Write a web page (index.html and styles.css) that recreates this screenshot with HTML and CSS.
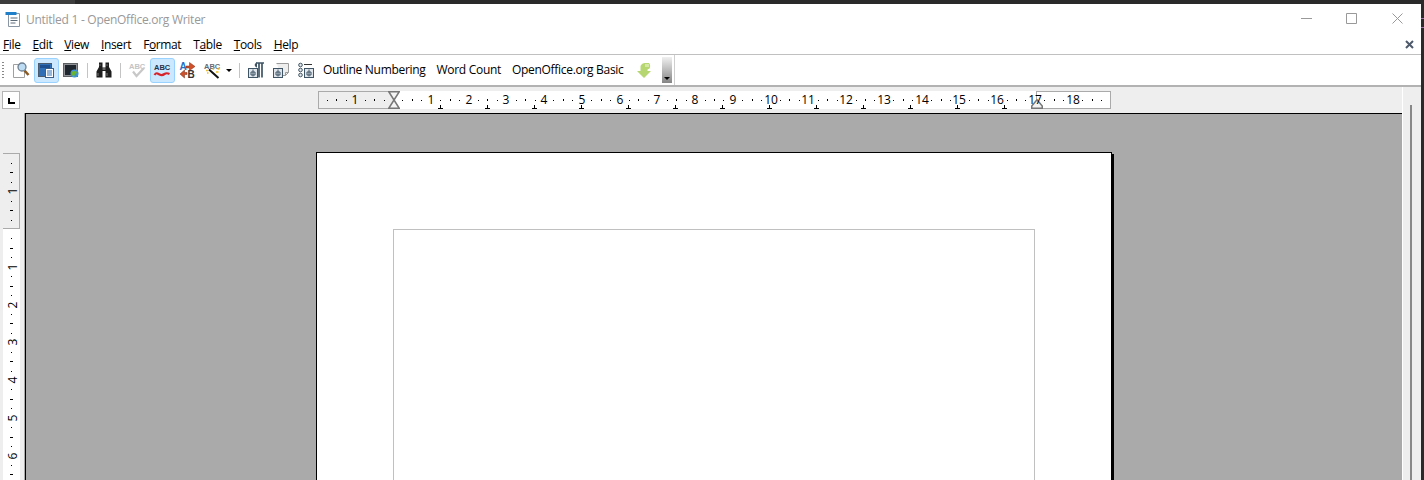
FILE: index.html
```html
<!DOCTYPE html>
<html lang="en">
<head>
  <meta charset="UTF-8">
  <title>Untitled 1 - OpenOffice.org Writer</title>
  <link rel="stylesheet" href="styles.css">
</head>
<body>
<div class="desktop-top"><div class="desktop-top-a"></div></div>
<div class="desktop-row">
<div class="window">

  <header class="titlebar">
    <svg class="app-icon" viewBox="0 0 16 16">
      <path d="M3.500 2.500h11v13h-11z" fill="#fff" stroke="#8a96a3"/>
      <rect x="0.500" y="1" width="11" height="3" fill="#1f7fc9"/>
      <path d="M5.500 7h7M5.500 9.500h7M5.500 12h5" stroke="#5d6b78"/>
    </svg>
    <span class="title-text">Untitled 1 - OpenOffice.org Writer</span>
    <div class="win-buttons">
      <svg class="win-min" viewBox="0 0 11 11"><path d="M0 5.500h11" stroke="#999"/></svg>
      <svg class="win-max" viewBox="0 0 11 11"><path d="M.5.5h10v10H.5z" fill="none" stroke="#999"/></svg>
      <svg class="win-close" viewBox="0 0 11 11"><path d="M.5.5l10 10M10.500.5l-10 10" fill="none" stroke="#999"/></svg>
    </div>
  </header>

  <nav class="menubar">
    <span><u>F</u>ile</span>
    <span><u>E</u>dit</span>
    <span><u>V</u>iew</span>
    <span><u>I</u>nsert</span>
    <span>F<u>o</u>rmat</span>
    <span>T<u>a</u>ble</span>
    <span><u>T</u>ools</span>
    <span><u>H</u>elp</span>
    <svg class="doc-close" viewBox="0 0 9 9"><path d="M1 1l7 7M8 1l-7 7" stroke="#4e5a6c" stroke-width="2"/></svg>
  </nav>

  <div class="toolbar-wrap">
    <div class="toolbar">
      <div class="grip"></div>

      <div class="tb">
        <svg viewBox="0 0 16 16">
          <path d="M.5 2.500h8l3 3v10H.5z" fill="#fff" stroke="#a0a0a0"/>
          <path d="M11.500 8.500l4 4.500" stroke="#8a5a20" stroke-width="2.600"/>
          <circle cx="9" cy="5" r="4" fill="#bcdcf4" stroke="#6d7f90" stroke-width="1.300"/>
        </svg>
      </div>
      <div class="tb on">
        <svg viewBox="0 0 16 16">
          <rect x="0.500" y="1.500" width="13" height="13" fill="#2e6fb5" stroke="#4a5c6e"/>
          <rect x="2" y="3" width="10" height="3" fill="#1c4f8f"/>
          <rect x="7.500" y="6.500" width="8" height="9" fill="#fff" stroke="#3c5f88"/>
          <path d="M9 9h5M9 11h5M9 13h5" stroke="#2e6fb5"/>
        </svg>
      </div>
      <div class="tb">
        <svg viewBox="0 0 16 16">
          <rect x="0.500" y="1.500" width="14" height="13" fill="#8f9296" stroke="#5d6063"/>
          <rect x="2" y="3" width="11" height="10" fill="#20262e"/>
          <circle cx="11.500" cy="11.500" r="4" fill="#3d92d6"/>
          <path d="M9 10c2-2 3 0 4-1l1 2-2 1-1 3-2-2z" fill="#6ab52f"/>
        </svg>
      </div>
      <div class="tb-sep"></div>
      <div class="tb">
        <svg viewBox="0 0 16 16">
          <path d="M3 .5h3.500v5h3v-5H13v4.500l2.500 4.500v6H9.500V9h-3v6.500H.5v-6L3 5z" fill="#1d1d1d"/>
          <path d="M2 11v3M11 11v3" stroke="#777"/>
          <rect x="6.500" y="6" width="3" height="2" fill="#666"/>
          <path d="M4 2v2M11 2v2" stroke="#666"/>
        </svg>
      </div>
      <div class="tb-sep"></div>
      <div class="tb">
        <svg viewBox="0 0 16 16">
          <text x="0" y="6.500" class="abc abc-off">ABC</text>
          <path d="M4 9.500l3.500 4.500 7.500-8" fill="none" stroke="#c8c8c8" stroke-width="2.200"/>
        </svg>
      </div>
      <div class="tb on">
        <svg viewBox="0 0 16 16">
          <text x="0" y="7.500" class="abc">ABC</text>
          <path d="M0.500 13c2-3 3-1.500 5-.5s3 1 5-.5 3-1 5 0" fill="none" stroke="#d8232a" stroke-width="2.200"/>
        </svg>
      </div>
      <div class="tb">
        <svg viewBox="0 0 16 16">
          <text x="0.500" y="8" class="big-a">A</text>
          <text x="8.500" y="15.500" class="big-b">B</text>
          <path d="M7 4h3.500V.5L16 4.500l-5.500 4V6H7z" fill="#d0502a" stroke="#7c2a12" stroke-width=".5"/>
          <path d="M8 12.500H5.500V16L1 12l4.500-4v2.500H8z" fill="#d0502a" stroke="#7c2a12" stroke-width=".5"/>
        </svg>
      </div>
      <div class="tb">
        <svg viewBox="0 0 16 16">
          <text x="0" y="6.500" class="abc abc-gray">ABC</text>
          <path d="M5 7.500l9.500 8.500" stroke="#111" stroke-width="2"/>
          <path d="M2 8.500h2M13.500 7h2M12 10h2.500M3 11h1.500M8.500 7h1.500" stroke="#f0c020" stroke-width="1.400"/>
        </svg>
      </div>
      <div class="tb-drop"></div>
      <div class="tb-sep tb-sep-b"></div>
      <div class="tb">
        <svg viewBox="0 0 16 16">
          <path d="M8 1h8M11 1.500v14M14 1.500v14" stroke="#3f5566" stroke-width="1.700"/>
          <path d="M9 .5C6 1 6 5 9 5.500z" fill="#3f5566"/>
          <rect x="0.500" y="6.500" width="9" height="9" fill="#dfe5ea" stroke="#3f5566"/>
          <path d="M5 7.500v7M3 10h4v3H3z" fill="none" stroke="#3f5566"/>
        </svg>
      </div>
      <div class="tb">
        <svg viewBox="0 0 16 16">
          <path d="M3.500 1.500h12v9l-3 3h-4" fill="#eee" stroke="#9a9a9a"/>
          <path d="M12.500 13.500v-3h3" fill="none" stroke="#9a9a9a"/>
          <rect x="0.500" y="6.500" width="9" height="9" fill="#dfe5ea" stroke="#3f5566"/>
          <path d="M5 7.500v7M3 10h4v3H3z" fill="none" stroke="#3f5566"/>
        </svg>
      </div>
      <div class="tb">
        <svg viewBox="0 0 16 16">
          <circle cx="2.500" cy="3" r="1.800" fill="#dfe5ea" stroke="#3f5566"/>
          <circle cx="2.500" cy="8" r="1.800" fill="#dfe5ea" stroke="#3f5566"/>
          <circle cx="2.500" cy="13" r="1.800" fill="#dfe5ea" stroke="#3f5566"/>
          <path d="M6 2.500h8" stroke="#333"/>
          <rect x="6.500" y="6.500" width="9" height="9" fill="#dfe5ea" stroke="#3f5566"/>
          <path d="M11 7.500v7M9 10h4v3H9z" fill="none" stroke="#3f5566"/>
        </svg>
      </div>

      <span class="tb-text first">Outline Numbering</span>
      <span class="tb-text">Word Count</span>
      <span class="tb-text">OpenOffice.org Basic</span>

      <div class="tb tb-arrow">
        <svg viewBox="0 0 16 16">
          <path d="M4.500 5C4.500 2.500 7 1 9.500 1H13c1.500 1 1.500 4.500.5 5.500L11.500 7.500V9H15l-7 7-7-7h3.500z" fill="#b6d672"/>
          <path d="M9 2h4v3H9z" fill="#d6e9a4"/>
        </svg>
      </div>
      <div class="tb-more"></div>
    </div>
  </div>

  <div class="ruler-row">
    <div class="tab-corner"><div class="tab-corner-mark"></div></div>
    <div class="hruler" id="hruler">
      <div class="hruler-off left"></div>
      <div class="hruler-off right"></div>
      <svg class="indent-mark first-indent" viewBox="0 0 12 18">
        <path d="M.75.75h10.500L6 9zM.75 17.250h10.500L6 9z" fill="#f4f4f4" stroke="#777" stroke-width="1.500"/>
      </svg>
      <svg class="indent-mark right-indent" viewBox="0 0 12 10">
        <path d="M.75 9.250h10.500V7L6 .75.750 7z" fill="#f4f4f4" stroke="#777" stroke-width="1.500"/>
      </svg>
    </div>
  </div>

  <div class="main-row">
    <div class="vruler-col">
      <div class="vruler" id="vruler">
        <div class="vruler-off"></div>
      </div>
    </div>
    <main class="workspace">
      <div class="page">
        <div class="text-area"></div>
      </div>
    </main>
    <div class="scroll-col"><div class="scroll-thumb"></div></div>
  </div>

</div>
<div class="desktop-edge"></div>
</div>
<script src="ruler.js"></script>
</body>
</html>
```

FILE: styles.css
```css
html, body { margin: 0; height: 480px; overflow: hidden; }
body { font-family: "Open Sans", "Noto Sans", sans-serif; font-size: 12px; color: #000; background: #fff; }

.desktop-top { height: 4px; background: #2a2a2a; }
.desktop-top-a { width: 75px; height: 4px; background: #3d3d3d; }
.desktop-row { display: flex; height: 476px; overflow: hidden; }
.desktop-edge { width: 3px; background: linear-gradient(#a070a8, #a070a8) 0 14px / 3px 1px no-repeat, linear-gradient(#a070a8, #a070a8) 0 23px / 3px 1px no-repeat, #2a2a2a; }
.window { flex: 1; display: flex; flex-direction: column; min-width: 0; background: #fff; }

.titlebar { height: 32px; display: flex; align-items: center; padding-left: 5px; flex: none; }
.app-icon { width: 16px; height: 16px; margin-right: 5px; margin-top: -3px; }
.title-text { color: #999; letter-spacing: -0.27px; margin-top: -2px; }
.win-buttons { margin-left: auto; display: flex; align-items: center; margin-top: -4px; }
.win-buttons svg { width: 11px; height: 11px; display: block; }
.win-min { margin-right: 34px; }
.win-max { margin-right: 35px; }
.win-close { margin-right: 18px; }

.menubar { display: flex; align-items: center; gap: 12px; padding: 0 0 2px 3px; height: 16px; border-bottom: 1px solid #c0c0c0; flex: none; letter-spacing: -0.38px; }
.doc-close { width: 9px; height: 9px; margin-left: auto; margin-right: 7px; margin-top: 1px; }

.toolbar-wrap { height: 32px; border-bottom: 2px solid #b2b2b2; box-sizing: border-box; flex: none; }
.toolbar { width: 674px; height: 30px; border-right: 1px solid #cfcfcf; display: flex; align-items: center; }
.grip { width: 2px; height: 17px; margin: 0 5px 0 2px; background: repeating-linear-gradient(#888 0 1px, #fff 1px 3px); }
.tb { width: 25px; height: 25px; box-sizing: border-box; padding: 4px; flex: none; }
.tb svg { display: block; width: 16px; height: 16px; overflow: visible; }
.tb.on { background: #cce8ff; border: 1px solid #99d1ff; border-radius: 3px; padding: 3px; }
.tb-sep { width: 1px; height: 15px; background: #c4c4c4; margin: 0 4px 0 3px; flex: none; }
.tb-sep-b { margin-left: 3px; }
.tb-drop { width: 0; height: 0; margin-left: 1px; border: 3px solid transparent; border-top: 3px solid #000; border-bottom: 0; margin-right: 4px; flex: none; }
.tb-text { padding-left: 11px; margin-top: -2px; white-space: nowrap; letter-spacing: -0.3px; }
.tb-text.first { padding-left: 4px; }
.tb-arrow { margin-left: 8px; }
.tb-more { width: 10px; height: 26px; margin-left: 5px; background: linear-gradient(#f0f0f0, #858585); position: relative; }
.tb-more::after { content: ""; position: absolute; left: 2px; bottom: 3px; border: 3px solid transparent; border-top: 3px solid #000; border-bottom: 0; }

.abc { font-family: "Liberation Sans", sans-serif; font-size: 7.500px; font-weight: bold; fill: #24324a; }
.abc-off { fill: #c4c4c4; }
.abc-gray { fill: #5f6c78; }
.big-a { font-family: "Liberation Sans", sans-serif; font-size: 10px; font-weight: bold; fill: #1f6fc4; }
.big-b { font-family: "Liberation Sans", sans-serif; font-size: 10px; font-weight: bold; fill: #333; }

.ruler-row { height: 26px; background: #eee; display: flex; align-items: flex-start; flex: none; }
.tab-corner { width: 18px; height: 18px; box-sizing: border-box; margin: 4px 0 0 2px; background: #fff; border: 1px solid #b4b4b4; position: relative; flex: none; }
.tab-corner-mark { position: absolute; left: 5px; top: 6px; width: 5px; height: 4px; border-left: 2px solid #000; border-bottom: 2px solid #000; }

.hruler { width: 793px; height: 18px; margin: 4px 0 0 298px; background: #fff; position: relative; flex: none; }
.hruler-off { position: absolute; top: 0; height: 18px; box-sizing: border-box; border: 1px solid #aaa; background: #eee; }
.hruler-off.left { left: 0; width: 76px; }
.hruler-off.right { left: 718px; width: 75px; background: transparent; }
.indent-mark { position: absolute; display: block; }
.first-indent { left: 70px; top: 0; width: 12px; height: 18px; }
.right-indent { left: 713px; top: 8px; width: 12px; height: 10px; }

.rtick { position: absolute; background: #000; width: 1px; height: 1px; }
.rnum { position: absolute; line-height: 12px; width: 16px; text-align: center; }
.htick { top: 9px; }
.htick.mid { top: 8px; height: 2px; }
.hnum { top: 3px; margin-left: -8px; }
.tab { position: absolute; top: 14px; width: 5px; height: 4px; margin-left: -2px; background: linear-gradient(#000, #000) center top / 1px 3px no-repeat, linear-gradient(#000, #000) bottom / 5px 1px no-repeat; }

.main-row { flex: 1; display: flex; min-height: 0; }
.vruler-col { width: 24px; background: #eee; flex: none; border-right: 1px solid #aaa; }
.vruler { position: relative; margin: 40px 0 0 3px; width: 17px; height: 327px; background: #fff; overflow: hidden; }
.vruler-off { position: absolute; left: -1px; top: 0; width: 18px; height: 76px; box-sizing: border-box; border: 1px solid #aaa; background: #eee; }
.vtick { left: 8px; }
.vtick.mid { left: 7px; width: 3px; height: 1px; }
.vnum { left: 2px; margin-top: -6px; transform: rotate(-90deg); }

.workspace { flex: 1; background: #aaa; border-top: 1px solid #000; border-left: 1px solid #000; padding: 38px 0 0 290px; min-width: 0; overflow: hidden; }
.page { width: 796px; height: 328px; box-sizing: border-box; background: #fff; border: 1px solid #000; border-bottom: 0; box-shadow: 2px 2px 0 #000; padding: 76px 0 0 76px; }
.text-area { width: 642px; height: 252px; box-sizing: border-box; border: 1px solid #c0c0c0; border-bottom: 0; }

.scroll-col { width: 19px; background: #eee; flex: none; position: relative; margin-top: -26px; border-left: 1px solid #fff; box-sizing: border-box; }
.scroll-thumb { position: absolute; left: 7px; top: 18px; width: 2px; bottom: 0; background: #888; }
```

FILE: ruler.js
```js
// origin of the ruler scale, relative to each ruler box
var STEP = 9.44;
var hruler = document.getElementById("hruler");
var vruler = document.getElementById("vruler");

function add(parent, cls, prop, pos, text) {
  var el = document.createElement("div");
  el.className = cls;
  el.style[prop] = Math.round(pos) + "px";
  if (text) el.textContent = text;
  parent.appendChild(el);
}

function mark(parent, kind, prop, origin, i) {
  var pos = origin + i * STEP;
  if (i % 4 === 0) {
    // no number at the margin itself
    if (i !== 0) add(parent, "rnum " + kind + "num", prop, pos, String(Math.abs(i / 4)));
  } else {
    add(parent, "rtick " + kind + "tick" + (i % 2 === 0 ? " mid" : ""), prop, pos);
  }
}

// horizontal: 75px left of the origin is the grey margin
for (var i = -7; i <= 75; i++) {
  mark(hruler, "h", "left", 75, i);
}
for (var t = 1; t <= 13; t++) {
  add(hruler, "tab", "left", 75 + t * 47);
}

// vertical
for (var j = -7; j <= 26; j++) {
  mark(vruler, "v", "top", 76, j);
}
```
